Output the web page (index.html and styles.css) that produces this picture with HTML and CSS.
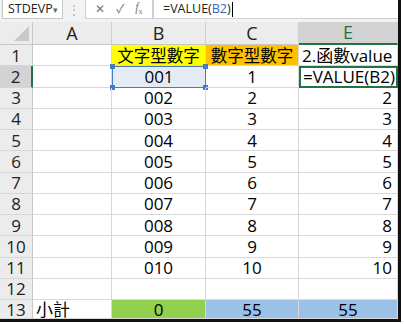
FILE: index.html
```html
<!DOCTYPE html>
<html lang="zh-Hant">
<head>
  <meta charset="UTF-8">
  <title>VALUE</title>
  <link rel="stylesheet" href="styles.css">
</head>
<body>
  <div class="window">
    <div class="formula-bar">
      <div class="name-box">
        <span>STDEVP</span>
        <span class="arrow">&#9662;</span>
      </div>
      <div class="grip">&#8942;</div>
      <div class="buttons">
        <span class="btn">&#10005;</span>
        <span class="btn">&#10003;</span>
        <span class="btn fx"><i>f</i><sub>x</sub></span>
      </div>
      <div class="formula">=VALUE(<span class="ref">B2</span>)<span class="caret"></span></div>
    </div>

    <div class="sheet">
      <div class="corner"><span class="tri"></span></div>
      <div class="col-head">A</div>
      <div class="col-head">B</div>
      <div class="col-head">C</div>
      <div class="col-head active">E</div>

      <div class="row-head">1</div>
      <div class="cell"></div>
      <div class="cell center yellow cjk">文字型數字</div>
      <div class="cell center orange cjk">數字型數字</div>
      <div class="cell">2.函數value</div>

      <div class="row-head active">2</div>
      <div class="cell"></div>
      <div class="cell center ref-cell">001<i class="h tl"></i><i class="h tr"></i><i class="h bl"></i><i class="h br"></i></div>
      <div class="cell center">1</div>
      <div class="cell edit">=VALUE(B2)</div>

      <div class="row-head">3</div><div class="cell"></div><div class="cell center">002</div><div class="cell center">2</div><div class="cell num">2</div>
      <div class="row-head">4</div><div class="cell"></div><div class="cell center">003</div><div class="cell center">3</div><div class="cell num">3</div>
      <div class="row-head">5</div><div class="cell"></div><div class="cell center">004</div><div class="cell center">4</div><div class="cell num">4</div>
      <div class="row-head">6</div><div class="cell"></div><div class="cell center">005</div><div class="cell center">5</div><div class="cell num">5</div>
      <div class="row-head">7</div><div class="cell"></div><div class="cell center">006</div><div class="cell center">6</div><div class="cell num">6</div>
      <div class="row-head">8</div><div class="cell"></div><div class="cell center">007</div><div class="cell center">7</div><div class="cell num">7</div>
      <div class="row-head">9</div><div class="cell"></div><div class="cell center">008</div><div class="cell center">8</div><div class="cell num">8</div>
      <div class="row-head">10</div><div class="cell"></div><div class="cell center">009</div><div class="cell center">9</div><div class="cell num">9</div>
      <div class="row-head">11</div><div class="cell"></div><div class="cell center">010</div><div class="cell center">10</div><div class="cell num">10</div>
      <div class="row-head">12</div><div class="cell"></div><div class="cell"></div><div class="cell"></div><div class="cell"></div>

      <div class="row-head">13</div>
      <div class="cell">小計</div>
      <div class="cell center green">0</div>
      <div class="cell center blue">55</div>
      <div class="cell center blue">55</div>
    </div>
  </div>
</body>
</html>
```

FILE: styles.css
```css
/* worksheet look */
body {
  margin: 0;
  background-color: #fff;
  font-family: "Open Sans", "Noto Sans CJK TC", sans-serif;
  color: #000;
}

.window {
  width: 398px;
  border-right: 3px solid #111;
  border-bottom: 3px solid #111;
  background-color: #f3f3f3;
}

/* formula bar */
.formula-bar {
  height: 22px;
  display: flex;
  align-items: flex-start;
  font-size: 12.5px;
  line-height: 1;
  color: #222;
}

.name-box {
  width: 61px;
  height: 19px;
  margin-left: 2px;
  padding: 0 4px 0 5px;
  box-sizing: border-box;
  background-color: #fff;
  border: 1px solid #c6c6c6;
  border-top: none;
  display: flex;
  align-items: center;
  justify-content: space-between;
}

.name-box .arrow {
  font-size: 9px;
  color: #666;
}

.grip {
  width: 22px;
  height: 19px;
  display: flex;
  align-items: center;
  justify-content: center;
  color: #b0b0b0;
  font-size: 12px;
}

.buttons {
  width: 68px;
  height: 19px;
  box-sizing: border-box;
  background-color: #fff;
  border: 1px solid #d0d0d0;
  border-top: none;
  display: flex;
  align-items: center;
  justify-content: space-around;
  padding: 0 4px;
  color: #777;
}

.btn {
  font-size: 12px;
}

.fx {
  font-family: "Liberation Serif", serif;
  font-size: 12px;
}

.fx sub {
  font-size: 8px;
}

.formula {
  flex: 1;
  height: 19px;
  box-sizing: border-box;
  background-color: #fff;
  border: 1px solid #d0d0d0;
  border-top: none;
  border-right: none;
  padding-left: 9px;
  display: flex;
  align-items: center;
}

.formula .ref {
  color: #3a66b5;
}

.caret {
  display: inline-block;
  width: 1px;
  height: 15px;
  margin-left: 1px;
  background-color: #000;
}

/* grid */
.sheet {
  display: grid;
  grid-template-columns: 33px 79px 94px 93px 99px;
  grid-template-rows: 23px repeat(12, 21.25px) 19px;
  background-color: #fff;
  font-size: 17px;
  line-height: 17px;
}

.sheet > div {
  box-sizing: border-box;
  display: flex;
  align-items: center;
  white-space: nowrap;
}

.corner {
  background-color: #ececec;
  border-right: 1px solid #c8c8c8;
  border-bottom: 1px solid #c8c8c8;
  position: relative;
}

.corner .tri {
  position: absolute;
  right: 3px;
  bottom: 3px;
  width: 0;
  height: 0;
  border-left: 15px solid transparent;
  border-bottom: 15px solid #c9c9c9;
}

.col-head {
  justify-content: center;
  background-color: #ececec;
  border-right: 1px solid #d0d0d0;
  border-bottom: 1px solid #c8c8c8;
  font-size: 18px;
  color: #222;
}

.col-head.active {
  background-color: #d3d3d3;
  color: #217346;
  border-bottom: 2px solid #217346;
}

.row-head {
  justify-content: center;
  background-color: #ececec;
  border-right: 1px solid #c8c8c8;
  border-bottom: 1px solid #d6d6d6;
  color: #222;
}

.row-head.active {
  background-color: #d3d3d3;
  border-right: 2px solid #217346;
}

.cell {
  border-right: 1px solid #d9d9d9;
  border-bottom: 1px solid #d9d9d9;
  padding: 0 3px;
  position: relative;
}

.cjk {
  font-size: 16.5px;
}

.center {
  justify-content: center;
}

.num {
  justify-content: flex-end;
  padding-right: 5px;
}

.yellow {
  background-color: #ffff00;
}

.orange {
  background-color: #ffc000;
}

.green {
  background-color: #92d050;
}

.blue {
  background-color: #9bc2e6;
}

.ref-cell {
  background-color: #e3ebf7;
  border: 1px solid #4a78c2;
}

.ref-cell .h {
  position: absolute;
  width: 5px;
  height: 5px;
  background-color: #4a78c2;
}

.h.tl { left: -3px; top: -3px; }
.h.tr { right: -3px; top: -3px; }
.h.bl { left: -3px; bottom: -3px; }
.h.br { right: -3px; bottom: -3px; }

.edit {
  border: 2px solid #217346;
  padding-left: 2px;
}
```
